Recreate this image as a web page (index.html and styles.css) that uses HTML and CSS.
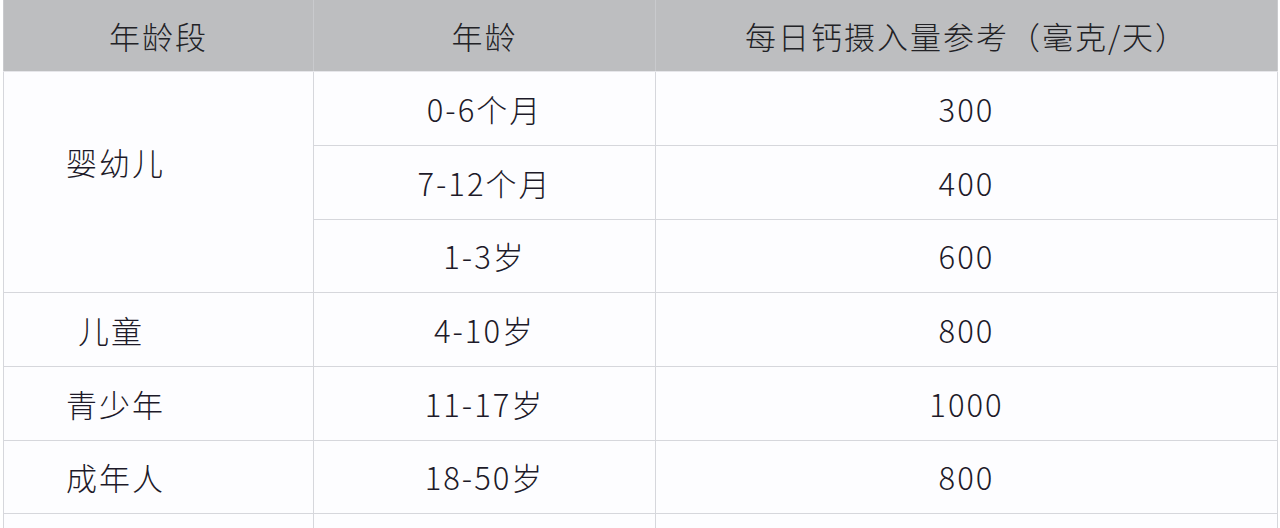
FILE: index.html
```html
<!DOCTYPE html>
<html lang="zh-CN">
<head>
<meta charset="utf-8">
<title>每日钙摄入量参考</title>
<link rel="stylesheet" href="styles.css">
</head>
<body>
<table class="calcium">
  <colgroup>
    <col class="c1">
    <col class="c2">
    <col class="c3">
  </colgroup>
  <thead>
    <tr class="head">
      <th>年龄段</th>
      <th>年龄</th>
      <th>每日钙摄入量参考（毫克/天）</th>
    </tr>
  </thead>
  <tbody>
    <tr class="r">
      <td class="group top" rowspan="3">婴幼儿</td>
      <td>0-6个月</td>
      <td>300</td>
    </tr>
    <tr class="r">
      <td>7-12个月</td>
      <td>400</td>
    </tr>
    <tr class="r short">
      <td>1-3岁</td>
      <td>600</td>
    </tr>
    <tr class="r">
      <td class="group indent">儿童</td>
      <td>4-10岁</td>
      <td>800</td>
    </tr>
    <tr class="r">
      <td class="group">青少年</td>
      <td>11-17岁</td>
      <td>1000</td>
    </tr>
    <tr class="r short">
      <td class="group">成年人</td>
      <td>18-50岁</td>
      <td>800</td>
    </tr>
    <tr class="r">
      <td class="group"></td>
      <td></td>
      <td></td>
    </tr>
  </tbody>
</table>
</body>
</html>
```

FILE: styles.css
```css
html, body {
  margin: 0;
  padding: 0;
  background: #ffffff;
}
body {
  padding-left: 3px;
  font-family: "Noto Sans CJK SC", "Noto Sans", sans-serif;
  color: #1d1a29;
}
.calcium {
  border-collapse: collapse;
  table-layout: fixed;
  width: 1274px;
  font-size: 31px;
  font-weight: 300;
  letter-spacing: 2px;
}
.c1 { width: 310px; }
.c2 { width: 342px; }
.c3 { width: 622px; }
.calcium th,
.calcium td {
  border: 1px solid #d6d7dc;
  padding: 0;
  text-align: center;
  vertical-align: middle;
  line-height: 40px;
  font-weight: 300;
}
.head th {
  height: 71px;
  background: #bdbec0;
  color: #222226;
  border-top: none;
  border-color: #c9cacd;
  border-bottom-color: #e6e6ea;
}
.calcium td {
  background: #fdfdff;
}
.r td { height: 73px; }
.r.short td { height: 72px; }
.calcium td.group {
  text-align: left;
  padding-left: 62px;
}
.calcium td.indent {
  padding-left: 74px;
}
.calcium td.top {
  vertical-align: top;
  padding-top: 70px;
}
```
